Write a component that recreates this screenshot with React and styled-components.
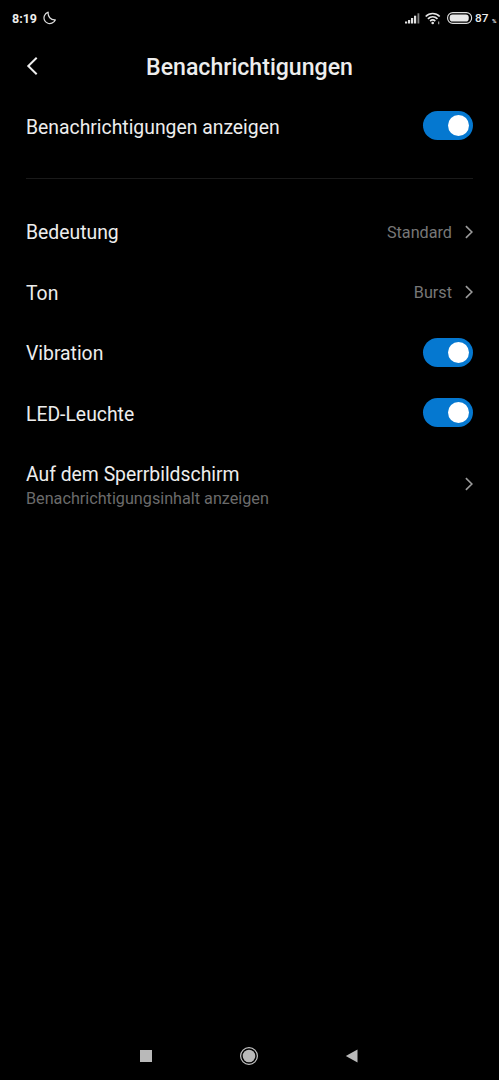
import React, { useState } from 'react';
import styled, { createGlobalStyle } from 'styled-components';

const GlobalStyle = createGlobalStyle`
  * {
    box-sizing: border-box;
  }

  body {
    margin: 0;
    background: #000;
    font-family: Roboto, sans-serif;
  }
`;

const Screen = styled.div`
  display: flex;
  flex-direction: column;
  height: 1080px;
  background: #000;
  color: #ededed;
`;

const StatusBar = styled.div`
  display: flex;
  align-items: center;
  height: 36px;
  padding: 0 2px 0 12px;
`;

const Clock = styled.span`
  width: 31px;
  padding-top: 1px;
  font-size: 12.5px;
  line-height: 16px;
  font-weight: 700;
  white-space: nowrap;
`;

const StatusIcons = styled.div`
  display: flex;
  align-items: center;
  margin-left: auto;
`;

const BatteryLevel = styled.span`
  width: 17px;
  margin-left: 2px;
  font-size: 11.8px;
  line-height: 16px;
  font-weight: 500;
`;

const Percent = styled.span`
  width: 5px;
  padding-top: 5px;
  font-size: 6px;
  line-height: 8px;
  font-weight: 700;
`;

const Header = styled.header`
  display: grid;
  grid-template-columns: 26px 1fr 26px;
  align-items: center;
  height: 59px;
  padding: 0 26px;
`;

const BackButton = styled.button`
  display: flex;
  width: 14px;
  padding: 0;
  border: none;
  background: none;
  color: #ededed;
  cursor: pointer;
`;

const Title = styled.h1`
  margin: 0;
  padding-top: 5px;
  font-size: 23.1px;
  line-height: 30px;
  font-weight: 500;
  text-align: center;
`;

const Section = styled.section`
  padding: 0 26px;
`;

const Divider = styled.hr`
  height: 1px;
  margin: 23px 26px 22px;
  border: none;
  background: #1a1a1a;
`;

const Row = styled.div`
  display: flex;
  align-items: center;
  height: ${({ $height }) => $height || 60.4}px;
`;

const RowText = styled.div`
  flex: 1;
  padding-top: ${({ $top }) => $top || 4}px;
`;

const Label = styled.div`
  font-size: 19.35px;
  line-height: 24px;
`;

const Hint = styled.div`
  font-size: 16.2px;
  line-height: 24px;
  color: #6b6b6b;
`;

const Value = styled.span`
  padding-top: 2px;
  margin-right: 13px;
  font-size: 16.2px;
  line-height: 20px;
  color: #777;
`;

const Switch = styled.button`
  display: flex;
  justify-content: ${({ $on }) => ($on ? 'flex-end' : 'flex-start')};
  align-items: center;
  width: 50px;
  height: 29px;
  padding: 0 4px;
  border: none;
  border-radius: 15px;
  background: ${({ $on }) => ($on ? '#0578d0' : '#3a3a3a')};
  cursor: pointer;
`;

const Knob = styled.span`
  width: 21px;
  height: 21px;
  border-radius: 50%;
  background: #fff;
`;

const NavBar = styled.nav`
  display: flex;
  justify-content: space-between;
  align-items: center;
  height: 48px;
  margin-top: auto;
  padding: 0 140px 0 139px;
`;

const Icon = styled.svg`
  display: block;
  flex: none;
  margin-right: ${({ $gap }) => $gap || 0}px;
`;

const MoonIcon = () => (
  <Icon width="14" height="14" viewBox="0 0 14 14" fill="none" stroke="#dcdcdc" strokeWidth="1.2" strokeLinejoin="round">
    <path d="M5.200 1.100C4.600 5.400 7.600 9.300 12.300 8.900C10.900 12 7.300 13.400 4.400 12C1.500 10.700 .3 7.500 1.400 4.700C2.100 2.900 3.600 1.600 5.200 1.100Z" />
  </Icon>
);

const SignalIcon = () => (
  <Icon $gap={5} width="15" height="11" viewBox="0 0 15 11" fill="#e0e0e0">
    <rect x="0" y="8.500" width="2.200" height="2" />
    <rect x="3" y="7" width="2.200" height="3.500" />
    <rect x="6" y="5" width="2.200" height="5.500" />
    <rect x="9" y="2.700" width="2.200" height="7.800" />
    <rect x="12.500" y="0.300" width="1.800" height="10.200" fill="#808080" />
  </Icon>
);

const WifiIcon = () => (
  <Icon $gap={6} width="16" height="13" viewBox="0 0 16 13" fill="none" stroke="#e6e6e6" strokeWidth="1.700">
    <path d="M.7 4.500C4.700 .5 10.700 .5 14.700 4.500" />
    <path d="M2.900 6.900C5.700 4.200 9.700 4.200 12.500 6.900" />
    <path d="M5.100 9.200C6.700 7.700 8.700 7.700 10.300 9.200" />
    <circle cx="7.700" cy="11" r="1.300" fill="#e6e6e6" stroke="none" />
    <path d="M13.700 9.500V12.300" strokeWidth="1.100" stroke="#aaa" />
  </Icon>
);

const BatteryIcon = () => (
  <Icon width="26" height="12" viewBox="0 0 26 12">
    <rect x="0.600" y="0.600" width="24" height="10.800" rx="5.200" fill="none" stroke="#e0e0e0" strokeWidth="1.100" />
    <rect x="2.700" y="2.500" width="19" height="7" rx="2.800" fill="#e8e8e8" />
  </Icon>
);

const BackIcon = () => (
  <Icon width="14" height="20" viewBox="0 0 14 20" fill="none" stroke="currentColor" strokeWidth="2">
    <path d="M10.700 1.800L2.300 10L10.700 18.200" />
  </Icon>
);

const ChevronIcon = () => (
  <Icon width="8" height="14" viewBox="0 0 8 14" fill="none" stroke="#9a9a9a" strokeWidth="1.700">
    <path d="M.9 1.200L6.900 7L.9 12.800" />
  </Icon>
);

const Toggle = ({ label }) => {
  const [on, setOn] = useState(true);

  return (
    <Switch type="button" role="switch" aria-label={label} aria-checked={on} $on={on} onClick={() => setOn(!on)}>
      <Knob />
    </Switch>
  );
};

const App = () => {
  return (
    <Screen>
      <GlobalStyle />
      <StatusBar>
        <Clock>8:19</Clock>
        <MoonIcon />
        <StatusIcons>
          <SignalIcon />
          <WifiIcon />
          <BatteryIcon />
          <BatteryLevel>87</BatteryLevel>
          <Percent>%</Percent>
        </StatusIcons>
      </StatusBar>

      <Header>
        <BackButton type="button" aria-label="Zurück">
          <BackIcon />
        </BackButton>
        <Title>Benachrichtigungen</Title>
      </Header>

      <Section>
        <Row>
          <RowText $top={5}><Label>Benachrichtigungen anzeigen</Label></RowText>
          <Toggle label="Benachrichtigungen anzeigen" />
        </Row>
      </Section>
      <Divider />
      <Section>
        <Row>
          <RowText $top={3}><Label>Bedeutung</Label></RowText>
          <Value>Standard</Value>
          <ChevronIcon />
        </Row>
        <Row>
          <RowText><Label>Ton</Label></RowText>
          <Value>Burst</Value>
          <ChevronIcon />
        </Row>
        <Row>
          <RowText><Label>Vibration</Label></RowText>
          <Toggle label="Vibration" />
        </Row>
        <Row>
          <RowText><Label>LED-Leuchte</Label></RowText>
          <Toggle label="LED-Leuchte" />
        </Row>
        <Row $height={83}>
          <RowText $top={6}>
            <Label>Auf dem Sperrbildschirm</Label>
            <Hint>Benachrichtigungsinhalt anzeigen</Hint>
          </RowText>
          <ChevronIcon />
        </Row>
      </Section>

      <NavBar>
        <Icon width="14" height="14" viewBox="0 0 14 14" fill="#b9b9b9">
          <rect x="1" y="1" width="12" height="12" />
        </Icon>
        <Icon width="20" height="20" viewBox="0 0 20 20">
          <circle cx="10" cy="10" r="8.400" fill="none" stroke="#c4c4c4" strokeWidth="1.200" />
          <circle cx="10" cy="10" r="6.300" fill="#b9b9b9" />
        </Icon>
        <Icon width="14" height="14" viewBox="0 0 14 14" fill="#b9b9b9">
          <path d="M.8 7L12.500 .5V13.500Z" />
        </Icon>
      </NavBar>
    </Screen>
  );
};

export default App;
